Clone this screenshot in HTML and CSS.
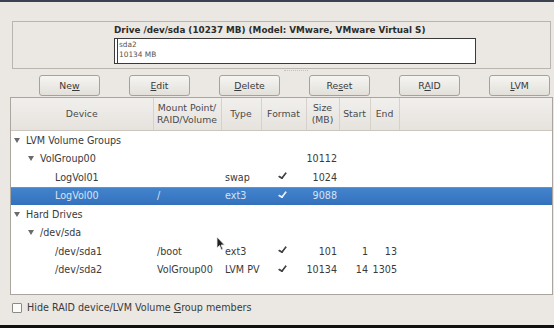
FILE: index.html
```html
<!DOCTYPE html>
<html lang="en">
<head>
  <meta charset="UTF-8" />
  <title>Partitioning</title>
  <link rel="stylesheet" href="styles.css">
</head>
<body>
  <div class="topline"></div>

  <div class="drive-frame">
    <div class="drive-title">Drive /dev/sda (10237 MB) (Model: VMware, VMware Virtual S)</div>
    <div class="drive-bar">
      <div class="seg-small"></div>
      <div class="seg-main">
        <span>sda2</span>
        <span>10134 MB</span>
      </div>
    </div>
  </div>

  <div class="grip"></div>

  <div class="button-row">
    <button type="button">Ne<u>w</u></button>
    <button type="button"><u>E</u>dit</button>
    <button type="button"><u>D</u>elete</button>
    <button type="button">Re<u>s</u>et</button>
    <button type="button">R<u>A</u>ID</button>
    <button type="button"><u>L</u>VM</button>
  </div>

  <div class="tree-frame">
    <table class="tree">
      <colgroup>
        <col class="c-device">
        <col class="c-mount">
        <col class="c-type">
        <col class="c-format">
        <col class="c-size">
        <col class="c-start">
        <col class="c-end">
        <col>
      </colgroup>
      <thead>
        <tr>
          <th>Device</th>
          <th>Mount Point/<br>RAID/Volume</th>
          <th>Type</th>
          <th>Format</th>
          <th>Size<br>(MB)</th>
          <th>Start</th>
          <th>End</th>
          <th class="filler"></th>
        </tr>
      </thead>
      <tbody>
        <tr>
          <td class="lvl0"><span class="expander"></span>LVM Volume Groups</td>
          <td></td><td></td><td></td><td></td><td></td><td></td><td></td>
        </tr>
        <tr>
          <td class="lvl1"><span class="expander"></span>VolGroup00</td>
          <td></td><td></td><td></td><td class="num">10112</td><td></td><td></td><td></td>
        </tr>
        <tr>
          <td class="lvl2">LogVol01</td>
          <td></td><td>swap</td><td class="check"><span class="tick"></span></td><td class="num">1024</td><td></td><td></td><td></td>
        </tr>
        <tr class="selected">
          <td class="lvl2">LogVol00</td>
          <td>/</td><td>ext3</td><td class="check"><span class="tick"></span></td><td class="num">9088</td><td></td><td></td><td></td>
        </tr>
        <tr>
          <td class="lvl0"><span class="expander"></span>Hard Drives</td>
          <td></td><td></td><td></td><td></td><td></td><td></td><td></td>
        </tr>
        <tr>
          <td class="lvl1"><span class="expander"></span>/dev/sda</td>
          <td></td><td></td><td></td><td></td><td></td><td></td><td></td>
        </tr>
        <tr>
          <td class="lvl2">/dev/sda1</td>
          <td>/boot</td><td>ext3</td><td class="check"><span class="tick"></span></td><td class="num">101</td><td class="num">1</td><td class="num">13</td><td></td>
        </tr>
        <tr>
          <td class="lvl2">/dev/sda2</td>
          <td>VolGroup00</td><td>LVM PV</td><td class="check"><span class="tick"></span></td><td class="num">10134</td><td class="num">14</td><td class="num">1305</td><td></td>
        </tr>
      </tbody>
    </table>
  </div>

  <label class="hide-members">
    <span class="checkbox"></span>
    <span>Hide RAID device/LVM Volume <u>G</u>roup members</span>
  </label>

  <div class="bottomline"></div>

  <svg class="cursor" width="10" height="15" viewBox="0 0 10 15">
    <path d="M1 1 L1 12 L3.5 9.5 L5.5 14 L7 13.3 L5 9 L8.5 9 Z" fill="#222" stroke="#eee" stroke-width="0.8"/>
  </svg>
</body>
</html>
```

FILE: styles.css
```css
body {
  margin: 0;
  width: 554px;
  height: 328px;
  overflow: hidden;
  position: relative;
  background-color: #ebe8e3;
  font-family: "DejaVu Sans", "Liberation Sans", sans-serif;
  font-size: 9.6px;
  color: #3a3a3a;
}

.topline {
  height: 2px;
  background-color: #3b4352;
}

.drive-frame {
  margin: 19px 0 0 12px;
  width: 436px;
  height: 44px;
  border: 1px solid #b9b5ae;
  padding: 2px 0 0 101px;
}

.drive-title {
  font-weight: bold;
  font-size: 8.8px;
  color: #2c2c2c;
  height: 13px;
  line-height: 13px;
}

.drive-bar {
  display: flex;
  width: 360px;
  height: 24px;
  margin-top: 1px;
  border: 1px solid #3a3a3a;
  background: #fff;
}

.seg-small {
  width: 2px;
  border-right: 1px solid #3a3a3a;
}

.seg-main {
  display: flex;
  flex-direction: column;
  padding: 1px 0 0 1px;
  font-size: 7.4px;
  line-height: 9.5px;
  color: #555;
}

.grip {
  width: 24px;
  height: 1px;
  margin: 1px 0 0 284px;
  border-top: 1px dotted #c4c0b8;
}

.button-row {
  display: flex;
  gap: 29px;
  padding-left: 39px;
  margin-top: 3px;
}

.button-row button {
  width: 61px;
  height: 21px;
  padding: 0;
  font-family: inherit;
  font-size: 9.3px;
  color: #3a3a3a;
  background: linear-gradient(#f6f5f2, #e3e0da);
  border: 1px solid #a6a29b;
  border-radius: 3px;
}

.tree-frame {
  margin: 1px 0 0 10px;
  width: 541px;
  height: 196px;
  border: 1px solid #aaa69f;
  background: #fff;
}

.tree {
  border-collapse: collapse;
  width: 100%;
  table-layout: fixed;
}

.c-device { width: 142px; }
.c-mount { width: 68px; }
.c-type { width: 40px; }
.c-format { width: 45px; }
.c-size { width: 33px; }
.c-start { width: 31px; }
.c-end { width: 29px; }

.tree th {
  height: 32px;
  padding: 0;
  font-weight: normal;
  font-size: 9.3px;
  line-height: 12px;
  color: #4a4a4a;
  text-align: center;
  background: linear-gradient(#f1efec, #e6e3de);
  border-right: 1px solid #d6d2cb;
  border-bottom: 1px solid #cbc7bf;
}

.tree th.filler {
  border-right: none;
}

.tree td {
  height: 18.5px;
  padding: 0 0 0 4px;
  white-space: nowrap;
  overflow: hidden;
}

.tree td.num {
  text-align: right;
  padding: 0 2px 0 0;
}

.tree td.check {
  padding: 0 0 0 19px;
}

.tree td.lvl0 { padding-left: 3px; }
.tree td.lvl1 { padding-left: 17px; }
.tree td.lvl2 { padding-left: 44px; }

.expander {
  display: inline-block;
  width: 0;
  height: 0;
  margin: 0 6px 1px 0;
  border-left: 3.5px solid transparent;
  border-right: 3.5px solid transparent;
  border-top: 5px solid #6a6a6a;
  vertical-align: middle;
}

.tick {
  display: inline-block;
  width: 3px;
  height: 6px;
  border-right: 2px solid #444;
  border-bottom: 2px solid #444;
  border-bottom-right-radius: 1px;
  transform: rotate(38deg) skewY(-8deg);
  margin-bottom: 2px;
}

.tree tr.selected td {
  color: #d6e3f3;
  background: linear-gradient(#76a6dc 0, #4383cc 1px, #3371bd 100%);
}

.tree tr.selected .tick {
  border-color: #e8eef8;
}

.hide-members {
  display: flex;
  align-items: center;
  gap: 5px;
  margin: 7px 0 0 12px;
  height: 11px;
  color: #3a3a3a;
}

.checkbox {
  width: 8px;
  height: 8px;
  border: 1px solid #8c8a85;
  border-radius: 1px;
  background: #fbfbfa;
}

.bottomline {
  position: absolute;
  left: 0;
  right: 0;
  bottom: 0;
  height: 3px;
  background: #111;
}

.cursor {
  position: absolute;
  left: 216px;
  top: 236px;
}
```
